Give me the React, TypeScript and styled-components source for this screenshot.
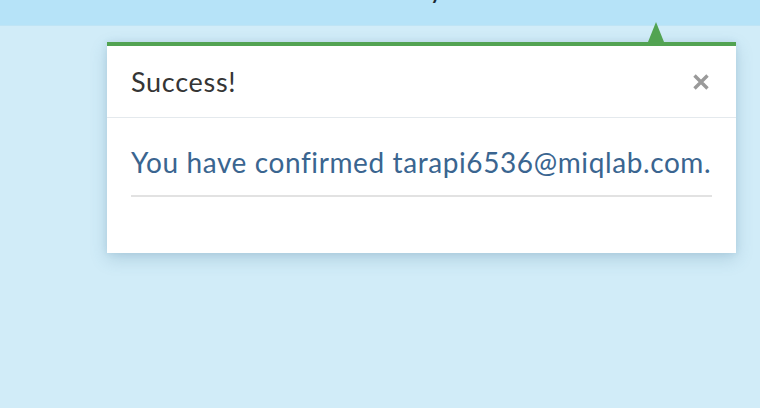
import React from 'react';
import styled, {createGlobalStyle} from 'styled-components';

const GlobalStyle = createGlobalStyle`
  html, body {
    margin: 0;
    padding: 0;
    background: #d1ecf8;
    font-family: Lato, "Open Sans", sans-serif;
  }
`;

export default function App() {
  return (
    <>
      <GlobalStyle />
      <Page>
        <TopBar>
          <PageTitle>Thank you</PageTitle>
        </TopBar>
        <Stage>
          <Popup>
            <Pointer />
            <PopupHeader>
              <HeaderTitle>Success!</HeaderTitle>
              <CloseButton aria-label="Close">
                <svg width="18" height="18" viewBox="0 0 18 18">
                  <path
                    d="M2.5 2.5 L15.5 15.5 M15.5 2.5 L2.5 15.5"
                    stroke="#9a9a9a"
                    strokeWidth="3.4"
                    strokeLinecap="butt"
                  />
                </svg>
              </CloseButton>
            </PopupHeader>
            <PopupBody>
              <Message>You have confirmed tarapi6536@miqlab.com.</Message>
            </PopupBody>
          </Popup>
        </Stage>
      </Page>
    </>
  );
}

const Page = styled.div`
  width: 760px;
  height: 408px;
  overflow: hidden;
  background: #d1ecf8;
`;

const TopBar = styled.div`
  height: 25px;
  background: #b6e3f8;
  border-bottom: 1px solid #bfe4f5;
  overflow: hidden;
  padding-left: 347px;
`;

const PageTitle = styled.h1`
  margin: -27px 0 0;
  font-size: 28px;
  line-height: 28px;
  font-weight: 400;
  color: #1d2a33;
  white-space: nowrap;
`;

const Stage = styled.div`
  padding: 16px 24px 0 107px;
`;

const Popup = styled.div`
  position: relative;
  width: 629px;
  background: #fff;
  border-top: 4px solid #52a352;
  box-shadow: 0 6px 16px rgba(60, 110, 140, 0.22), 0 0 6px rgba(60, 110, 140, 0.12);
`;

const Pointer = styled.div`
  position: absolute;
  top: -24px;
  left: 541px;
  width: 0;
  height: 0;
  border-left: 8px solid transparent;
  border-right: 8px solid transparent;
  border-bottom: 20px solid #52a352;
`;

const PopupHeader = styled.div`
  height: 71px;
  display: flex;
  align-items: center;
  justify-content: space-between;
  padding: 0 26px 0 24px;
  border-bottom: 1px solid #e4e9ed;
`;

const HeaderTitle = styled.h3`
  margin: 0;
  font-size: 27px;
  letter-spacing: 0.7px;
  font-weight: 400;
  color: #353535;
`;

const CloseButton = styled.button`
  border: 0;
  background: none;
  padding: 0;
  display: flex;
  cursor: pointer;
`;

const PopupBody = styled.div`
  padding: 28px 24px 56px;
`;

const Message = styled.p`
  margin: 0;
  padding-bottom: 17px;
  border-bottom: 2px solid #e2e2e2;
  font-size: 28px;
  letter-spacing: 0.6px;
  line-height: 32px;
  color: #3a6590;
  white-space: nowrap;
`;
